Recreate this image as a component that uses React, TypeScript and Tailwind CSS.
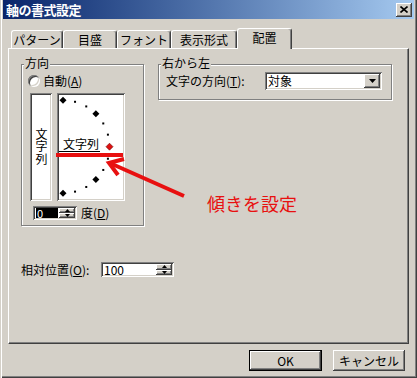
import React from "react";

const raised =
  "bg-[#d4d0c8] shadow-[inset_-1px_-1px_0_#404040,inset_1px_1px_0_#ffffff,inset_-2px_-2px_0_#808080,inset_2px_2px_0_#d4d0c8]";
const sunken =
  "bg-white shadow-[inset_1px_1px_0_#808080,inset_-1px_-1px_0_#ffffff,inset_2px_2px_0_#404040,inset_-2px_-2px_0_#d4d0c8]";
const etched = "border border-[#808080] shadow-[inset_1px_1px_0_#ffffff,1px_1px_0_#ffffff]";

const GroupBox = ({ label, className, children }: { label: string; className: string; children: React.ReactNode }) => (
  <div className={`relative ${etched} ${className}`}>
    <span className="absolute left-[2px] top-[-9px] bg-[#d4d0c8] px-[1px] leading-[14px]">{label}</span>
    {children}
  </div>
);

const Spinner = () => (
  <div className="flex h-full w-[16px] flex-col">
    <div className={`${raised} flex flex-1 items-center justify-center`}>
      <svg width="5" height="3" viewBox="0 0 5 3"><path d="M2.5 0 L5 3 L0 3 Z" fill="#000" /></svg>
    </div>
    <div className={`${raised} flex flex-1 items-center justify-center`}>
      <svg width="5" height="3" viewBox="0 0 5 3"><path d="M0 0 L5 0 L2.5 3 Z" fill="#000" /></svg>
    </div>
  </div>
);

const Dial = () => {
  const cx = 6;
  const cy = 53.7;
  const r = 46.5;
  const marks = [90, 75, 60, 45, 30, 15, 0, -15, -30, -45, -60, -75, -90];
  return (
    <div className={`${sunken} relative h-[108px] w-[68px] overflow-hidden`}>
      <svg className="absolute inset-0" width="68" height="108">
        {marks.map((a) => {
          const x = cx + r * Math.cos((a * Math.PI) / 180);
          const y = cy - r * Math.sin((a * Math.PI) / 180);
          if (a % 45 === 0) {
            const red = a === 0;
            return (
              <path
                key={a}
                d={`M${x} ${y - 3.5} L${x + 3.5} ${y} L${x} ${y + 3.5} L${x - 3.5} ${y} Z`}
                fill={red ? "#e01010" : "#000"}
                stroke={red ? "#600" : "none"}
                strokeWidth="0.6"
              />
            );
          }
          return <rect key={a} x={x - 1} y={y - 1} width="2" height="2" fill="#000" />;
        })}
        <line x1="2" y1="58.5" x2="43" y2="58.5" stroke="#000" strokeWidth="1" />
      </svg>
      <span className="absolute left-[6px] top-[45px] leading-[12px]">文字列</span>
    </div>
  );
};

export default function App() {
  return (
    <div
      className="relative flex h-[378px] w-[417px] flex-col bg-[#d4d0c8] px-[3px] text-[12px] text-black shadow-[inset_1px_0_0_#d4d0c8,inset_2px_0_0_#ffffff,inset_-1px_-1px_0_#404040,inset_-2px_-2px_0_#808080] font-['Noto_Sans_CJK_JP','Noto_Sans',sans-serif]"
    >
      {/* title bar */}
      <div className="flex h-[19px] items-center justify-between bg-gradient-to-r from-[#0a246a] to-[#a6caf0] pl-[3px] pr-[2px]">
        <span className="text-[13px] font-bold leading-none tracking-[-0.5px] text-white">軸の書式設定</span>
        <div className={`${raised} flex h-[14px] w-[16px] items-center justify-center`}>
          <svg width="8" height="7" viewBox="0 0 8 7">
            <path d="M0.5 0.5 L7.5 6.5 M7.5 0.5 L0.5 6.5" stroke="#000" strokeWidth="1.6" />
          </svg>
        </div>
      </div>

      {/* tabs */}
      <div className="ml-[8px] mt-[9px] flex h-[20px] items-end">
        {[
          ["パターン", "w-[52px]"],
          ["目盛", "w-[54px]"],
          ["フォント", "w-[54px]"],
          ["表示形式", "w-[66px]"],
        ].map(([t, w]) => (
          <div
            key={t}
            className={`${w} flex h-[18px] items-center justify-center rounded-t-[3px] border-l border-t border-r border-l-white border-t-white border-r-[#404040] shadow-[inset_-1px_0_0_#808080] leading-none`}
          >
            {t}
          </div>
        ))}
        <div className="relative z-10 mb-[-1px] flex h-[21px] w-[55px] items-center justify-center rounded-t-[3px] border-l border-t border-r border-l-white border-t-white border-r-[#404040] bg-[#d4d0c8] pb-[2px] shadow-[inset_-1px_0_0_#808080] leading-none">
          配置
        </div>
      </div>

      {/* panel */}
      <div className="ml-[5px] flex h-[296px] w-[401px] flex-col border-b border-l border-r border-t border-b-[#404040] border-l-white border-r-[#404040] border-t-white pl-[12px] pt-[15px] shadow-[inset_-1px_-1px_0_#808080]">
        <div className="flex items-start gap-[14px]">
          <GroupBox label="方向" className="h-[162px] w-[123px]">
            <div className="flex flex-col pl-[6px] pt-[10px]">
              <div className="flex h-[12px] items-center gap-[3px]">
                <div className="h-[12px] w-[12px] rounded-full bg-white shadow-[inset_1px_1px_0_#808080,inset_-1px_-1px_0_#ffffff,inset_2px_2px_0_#404040,inset_-2px_-2px_0_#d4d0c8]" />
                <span className="leading-none">
                  自動(<span className="underline">A</span>)
                </span>
              </div>
              <div className="ml-[2px] mt-[6px] flex gap-[5px]">
                <div className={`${sunken} flex h-[108px] w-[22px] items-center justify-center`}>
                  <span className="leading-[12px] tracking-[0.5px] [writing-mode:vertical-rl]">文字列</span>
                </div>
                <Dial />
              </div>
              <div className="ml-[5px] mt-[5px] flex h-[14px] items-center gap-[4px]">
                <div className={`${sunken} flex h-[14px] w-[44px] items-center pl-[3px] pr-[2px]`}>
                  <div className="flex h-[10px] w-[22px] items-center bg-black pl-[1px] text-[11px] leading-none text-white">0</div>
                  <div className="ml-auto h-[10px]">
                    <Spinner />
                  </div>
                </div>
                <span className="leading-none">
                  度(<span className="underline">D</span>)
                </span>
              </div>
            </div>
          </GroupBox>

          <GroupBox label="右から左" className="h-[36px] w-[234px]">
            <div className="flex items-center pl-[7px] pt-[7px]">
              <span className="w-[99px] leading-none">
                文字の方向(<span className="underline">T</span>):
              </span>
              <div className={`${sunken} flex h-[18px] w-[117px] items-center pl-[3px] pr-[2px]`}>
                <span className="leading-none">対象</span>
                <div className={`${raised} ml-auto flex h-[14px] w-[16px] items-center justify-center`}>
                  <svg width="7" height="4" viewBox="0 0 7 4"><path d="M0 0 L7 0 L3.5 4 Z" fill="#000" /></svg>
                </div>
              </div>
            </div>
          </GroupBox>
        </div>

        <div className="mt-[36px] flex h-[15px] items-center">
          <span className="w-[80px] leading-none">
            相対位置(<span className="underline">O</span>):
          </span>
          <div className={`${sunken} flex h-[15px] w-[73px] items-center pl-[3px] pr-[2px]`}>
            <span className="leading-none">100</span>
            <div className="ml-auto h-[11px]">
              <Spinner />
            </div>
          </div>
        </div>
      </div>

      {/* buttons */}
      <div className="mt-[6px] flex justify-end gap-[11px] pr-[9px]">
        <div className="flex h-[21px] w-[73px] items-center justify-center border border-black bg-[#d4d0c8] shadow-[inset_-1px_-1px_0_#404040,inset_1px_1px_0_#ffffff,inset_-2px_-2px_0_#808080] leading-none">
          OK
        </div>
        <div className={`${raised} flex h-[21px] w-[72px] items-center justify-center leading-none`}>キャンセル</div>
      </div>

      {/* annotation */}
      <svg className="pointer-events-none absolute left-0 top-0" width="417" height="378">
        <rect x="56" y="153" width="67" height="4" fill="#e81010" />
        <line x1="184" y1="196" x2="112" y2="164" stroke="#e81010" strokeWidth="4" />
        <polyline points="124,159 109,163 118,175" fill="none" stroke="#e81010" strokeWidth="4" strokeLinejoin="miter" />
      </svg>
      <span className="absolute left-[207px] top-[193px] text-[18px] leading-[20px] text-[#e81010]">傾きを設定</span>
    </div>
  );
}
